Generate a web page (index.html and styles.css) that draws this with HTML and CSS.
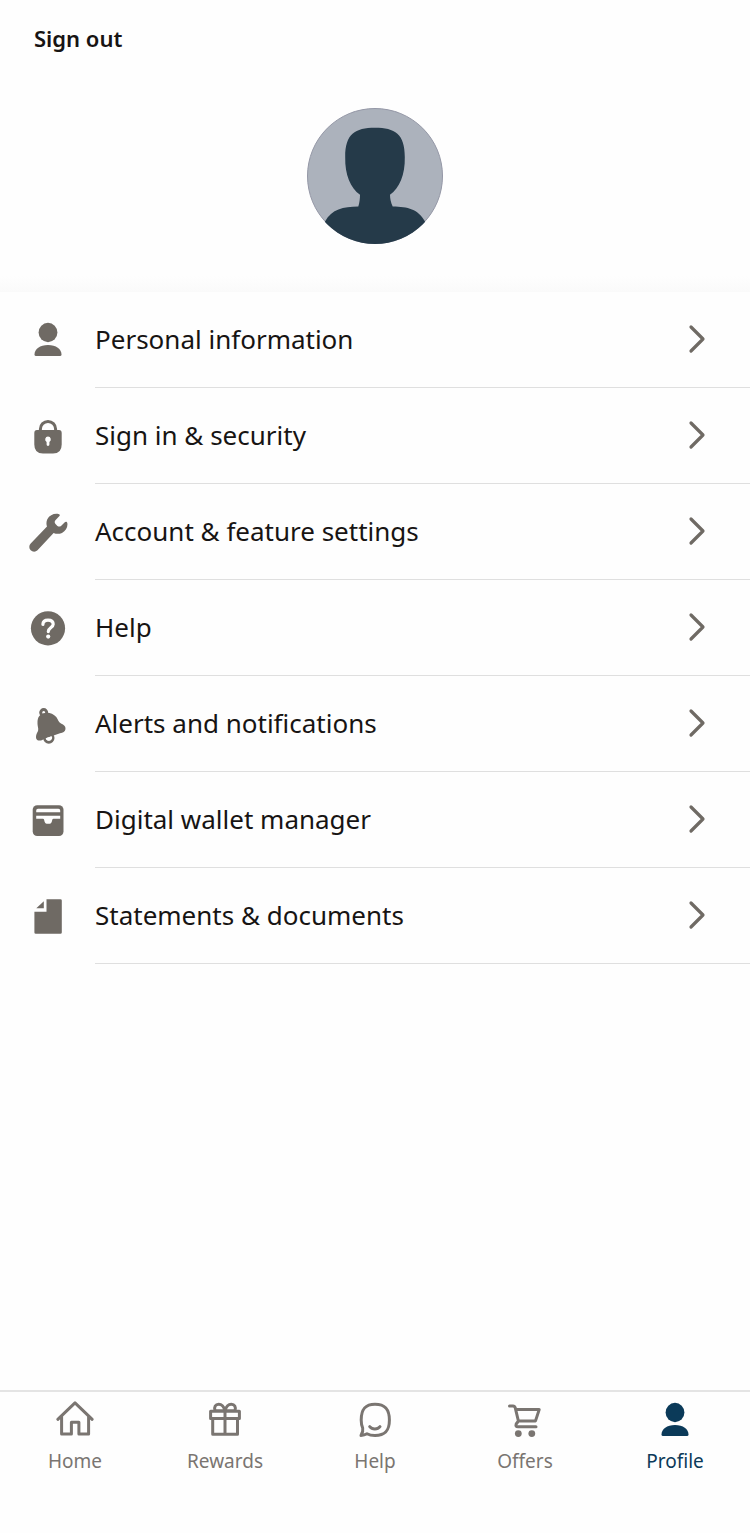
FILE: index.html
```html
<!DOCTYPE html>
<html lang="en">
<head>
    <meta charset="UTF-8">
    <meta name="viewport" content="width=device-width, initial-scale=1.0">
    <title>Profile</title>
    <link rel="stylesheet" href="styles.css">
</head>
<body>
    <svg class="sprite" width="0" height="0" aria-hidden="true">
        <symbol id="chevron" viewBox="0 0 20 30">
            <path d="M4 3L16 15L4 27" fill="none" stroke="currentColor" stroke-width="3.2" stroke-linecap="round" stroke-linejoin="round"/>
        </symbol>
    </svg>

    <header class="profile-header">
        <button class="sign-out" type="button">Sign out</button>
        <svg class="avatar" viewBox="0 0 136 136" role="img" aria-label="Profile picture">
            <defs>
                <clipPath id="avatar-clip"><circle cx="68" cy="68" r="68"/></clipPath>
            </defs>
            <circle cx="68" cy="68" r="67.5" fill="#acb2bc" stroke="#9497a6"/>
            <path clip-path="url(#avatar-clip)" fill="#253a49" d="M68 19.8C88 19.8 97.8 26 97.8 49C98.2 67 92.5 80 83 86.8C83 91 84 95 85.7 98.5C101 98.8 111 101 118 113.5V136H18V113.5C25 101 36 98.8 51.3 98.5C52.5 95 53 91 53 86.8C43.5 80 37.8 67 38.2 49C38.2 26 48 19.8 68 19.8Z"/>
        </svg>
    </header>

    <main>
        <ul class="menu">
            <li>
                <a class="menu-item" href="#">
                    <svg class="icon" viewBox="0 0 40 40"><ellipse cx="20" cy="12.5" rx="9.4" ry="9.7"/><path d="M6.5 34.5C6.5 29 12 25 20 25S33.5 29 33.5 34.5Q33.5 36 32 36H8Q6.5 36 6.5 34.5Z"/></svg>
                    <span class="menu-label">Personal information <svg class="chevron"><use href="#chevron"/></svg></span>
                </a>
            </li>
            <li>
                <a class="menu-item" href="#">
                    <svg class="icon" viewBox="0 0 40 40"><path class="line" d="M12.4 16V13A7.6 7.6 0 0 1 27.6 13V16"/><path fill-rule="evenodd" d="M9 14H31Q33.7 14 33.7 17V28.5Q33.7 37.6 25 37.6H15Q6.3 37.6 6.3 28.5V17Q6.3 14 9 14ZM20 20.6A2.9 2.9 0 0 0 18.6 26V28.5A1.4 1.4 0 0 0 21.4 28.5V26A2.9 2.9 0 0 0 20 20.6Z"/></svg>
                    <span class="menu-label">Sign in &amp; security <svg class="chevron"><use href="#chevron"/></svg></span>
                </a>
            </li>
            <li>
                <a class="menu-item" href="#">
                    <svg class="icon" viewBox="0 0 40 40"><path d="M31.2 4.2C32.3 3.4 31.8 2.3 30.5 2C26 1.2 21.5 3.2 19.3 7.2C18.2 9.7 18.2 12.2 19 14.6L2.7 31.5A4.6 4.6 0 0 0 9.5 38.3L25.6 21C28.3 22.2 31.3 22.1 34 20.9C38 18.8 40 14.6 39.3 11C39 9.6 37.7 9.3 36.8 10.2L33 13.9Q31.2 15.2 29.4 13.9L27.3 11.8Q26 10 27.4 8.2Z"/></svg>
                    <span class="menu-label">Account &amp; feature settings <svg class="chevron"><use href="#chevron"/></svg></span>
                </a>
            </li>
            <li>
                <a class="menu-item" href="#">
                    <svg class="icon" viewBox="0 0 40 40"><circle cx="20" cy="20.3" r="17.1"/><path class="knockout-line" d="M14.9 16.4C15 13.5 17.2 12.1 20 12.1C23.2 12.1 25.2 13.8 25.2 16.3C25.2 19.5 20.3 19.5 20.3 23.6"/><circle class="knockout" cx="20.2" cy="28.6" r="2.1"/></svg>
                    <span class="menu-label">Help <svg class="chevron"><use href="#chevron"/></svg></span>
                </a>
            </li>
            <li>
                <a class="menu-item" href="#">
                    <svg class="icon" viewBox="0 0 40 40"><circle class="line" cx="15.7" cy="8.6" r="3"/><circle class="line" cx="20.8" cy="34" r="4.2"/><path d="M9.5 18C9.6 13.3 11.5 10.8 15.3 9.2C19.5 7.8 25 9 28.3 13C30.3 15.6 30.3 18.2 33 19.6C36 20.9 37.7 22.3 37.5 25C37.2 27.8 35 28.5 32 29.2L17 34.5C14.4 35.8 13 37 10.5 36.4C8 36 7.6 33.4 8.4 30.5C9 28.4 10.6 27.2 10.2 24.5C9.8 22 9.4 20.3 9.5 18Z"/><path class="knockout" d="M17.7 34.3L24 32.3C24.6 35.4 22.8 36.7 21 36.7C19.2 36.7 17.9 35.8 17.7 34.3Z"/></svg>
                    <span class="menu-label">Alerts and notifications <svg class="chevron"><use href="#chevron"/></svg></span>
                </a>
            </li>
            <li>
                <a class="menu-item" href="#">
                    <svg class="icon" viewBox="0 0 40 40"><rect x="4.7" y="5.3" width="30.8" height="30.8" rx="4.5"/><path class="knockout" d="M10 8.7H30.4Q32.2 8.7 32.2 10.5V12.2H8.2V10.5Q8.2 8.7 10 8.7ZM8.2 15.7H32.2V18.7H25.5Q24.5 18.7 24.3 19.8Q23.6 23.8 21.7 23.8H18.7Q16.8 23.8 16.1 19.8Q15.9 18.7 14.9 18.7H8.2Z"/></svg>
                    <span class="menu-label">Digital wallet manager <svg class="chevron"><use href="#chevron"/></svg></span>
                </a>
            </li>
            <li>
                <a class="menu-item" href="#">
                    <svg class="icon" viewBox="0 0 40 40"><path d="M18.5 3.2H32.4Q33.8 3.2 33.8 4.6V36.4Q33.8 37.8 32.4 37.8H7.8Q6.4 37.8 6.4 36.4V15.7H18.5Z"/><path d="M15.8 5.3V12.3H8.3Z"/></svg>
                    <span class="menu-label">Statements &amp; documents <svg class="chevron"><use href="#chevron"/></svg></span>
                </a>
            </li>
        </ul>
    </main>

    <nav class="tab-bar">
        <a class="tab" href="#">
            <svg class="tab-icon" viewBox="0 0 40 40"><path d="M2.8 19.3L20 2.8L37.2 19.3M6.6 16.5V34H16.4V22.3H23.9V34H33.6V16.5"/></svg>
            <span>Home</span>
        </a>
        <a class="tab" href="#">
            <svg class="tab-icon" viewBox="0 0 40 40"><path d="M5.6 11.2H34.4V18.6H5.6ZM7.7 18.6H32.5V34.3H7.7ZM20 11V34M20 10.8H10C8.8 7 10.5 4.2 13.7 4.2C17 4.2 19 7 20 10.8C21 7 23 4.2 26.3 4.2C29.5 4.2 31.2 7 30 10.8Z"/></svg>
            <span>Rewards</span>
        </a>
        <a class="tab" href="#">
            <svg class="tab-icon" viewBox="0 0 40 40"><path d="M20 4.2C30.5 4.2 34.4 9.5 34.4 20C34.4 31 30 35.5 20 35.5C17 35.5 14.2 35 12 33.8C10.2 34.9 8 35.4 6 35.4C7.6 33 8.2 30.6 7.7 28.2C6.5 25.7 6.2 23 6.2 20C6.2 9.5 10 4.2 20 4.2ZM14.7 26.6C17.2 29.8 22.5 29.8 25 26.6"/></svg>
            <span>Help</span>
        </a>
        <a class="tab" href="#">
            <svg class="tab-icon" viewBox="0 0 40 40"><path d="M4.5 5.9H8Q9.7 5.9 10.2 7.7L13.4 21L11.2 24Q10.2 26.8 13 26.8H31M10.8 9.6H34.2L30.5 20.9H13.4"/><g class="wheels"><circle cx="13.3" cy="33.6" r="3.4"/><circle cx="26.8" cy="33.6" r="3.4"/></g></svg>
            <span>Offers</span>
        </a>
        <a class="tab active" href="#" aria-current="page">
            <svg class="tab-icon solid" viewBox="0 0 40 40"><ellipse cx="20" cy="12.5" rx="9.4" ry="9.7"/><path d="M6.5 34.5C6.5 29 12 25 20 25S33.5 29 33.5 34.5Q33.5 36 32 36H8Q6.5 36 6.5 34.5Z"/></svg>
            <span>Profile</span>
        </a>
    </nav>
</body>
</html>
```
FILE: styles.css
```css
* {
    box-sizing: border-box;
}

body {
    display: flex;
    flex-direction: column;
    min-height: 100vh;
    margin: 0;
    background-color: #fefefe;
    color: #171413;
    font-family: "Noto Sans", "Open Sans", sans-serif;
}

a {
    color: inherit;
    text-decoration: none;
}

.sprite {
    display: none;
}

/* Header */
.profile-header {
    display: flex;
    flex-direction: column;
    padding: 23px 34px 48px;
    background: linear-gradient(to top, #fafafa, #fefefe 16px);
}

.sign-out {
    align-self: flex-start;
    padding: 0;
    border: 0;
    background: none;
    color: inherit;
    font-family: inherit;
    font-size: 22px;
    font-weight: 600;
    line-height: 30px;
    cursor: pointer;
}

.avatar {
    align-self: center;
    width: 136px;
    height: 136px;
    margin-top: 55px;
}

/* Menu */
main {
    flex: 1;
}

.menu {
    margin: 0;
    padding: 0;
    list-style: none;
}

.menu-item {
    display: grid;
    grid-template-columns: 95px 1fr;
    align-items: center;
    height: 96px;
}

.icon {
    justify-self: center;
    width: 40px;
    height: 40px;
    fill: #6f6a64;
}

.icon .line {
    fill: none;
    stroke: #6f6a64;
    stroke-width: 3;
}

.icon .knockout {
    fill: #fefefe;
}

.icon .knockout-line {
    fill: none;
    stroke: #fefefe;
    stroke-width: 3.2;
    stroke-linecap: round;
}

.menu-label {
    display: flex;
    align-items: center;
    justify-content: space-between;
    height: 100%;
    padding-right: 43px;
    padding-bottom: 1px;
    border-bottom: 1px solid #dfdfdf;
    font-size: 26px;
    line-height: 36px;
}

.chevron {
    width: 20px;
    height: 30px;
    color: #6f6a64;
}

/* Bottom tabs */
.tab-bar {
    display: grid;
    grid-template-columns: repeat(5, 1fr);
    padding: 8px 0 57px;
    border-top: 2px solid #e4e4e4;
    color: #7a7571;
}

.tab {
    display: flex;
    flex-direction: column;
    align-items: center;
    gap: 6px;
    font-size: 19px;
    line-height: 30px;
}

.tab.active {
    color: #0b3a59;
}

.tab-icon {
    width: 40px;
    height: 40px;
    fill: none;
    stroke: currentColor;
    stroke-width: 3;
    stroke-linecap: round;
    stroke-linejoin: round;
}

.tab-icon.solid,
.wheels {
    fill: currentColor;
    stroke: none;
}
```
